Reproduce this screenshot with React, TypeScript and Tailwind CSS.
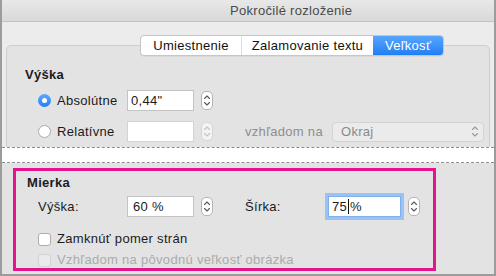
import React from "react";

const font = "font-['Liberation_Sans',Arial,sans-serif]";

function Stepper({ disabled = false }: { disabled?: boolean }) {
  const c = disabled ? "#c4c4c4" : "#5a5a5a";
  return (
    <div
      className={`w-[12px] h-[19px] rounded-[5px] border flex items-center justify-center ${
        disabled ? "border-[#d6d6d6] bg-[#f3f3f3]" : "border-[#b4b4b4] bg-white"
      }`}
    >
      <svg width="8" height="13" viewBox="0 0 8 13" fill="none">
        <path d="M1.5 4.5 L4 2 L6.5 4.5" stroke={c} strokeWidth="1.1" strokeLinecap="round" strokeLinejoin="round" />
        <path d="M1.5 8.5 L4 11 L6.5 8.5" stroke={c} strokeWidth="1.1" strokeLinecap="round" strokeLinejoin="round" />
      </svg>
    </div>
  );
}

function Radio({ checked = false }: { checked?: boolean }) {
  if (checked) {
    return (
      <div className="w-[13px] h-[13px] rounded-full bg-gradient-to-b from-[#5fa8fb] to-[#1f7ef5] flex items-center justify-center">
        <div className="w-[5px] h-[5px] rounded-full bg-white" />
      </div>
    );
  }
  return <div className="w-[13px] h-[13px] rounded-full bg-white border border-[#a9a9a9]" />;
}

function Checkbox({ disabled = false }: { disabled?: boolean }) {
  return (
    <div
      className={`w-[13px] h-[13px] rounded-[3px] border ${
        disabled ? "border-[#d3d3d3] bg-[#eaeaea]" : "border-[#adadad] bg-white"
      }`}
    />
  );
}

const tabs = [
  { label: "Umiestnenie", w: "w-[100px]" },
  { label: "Zalamovanie textu", w: "w-[132px]" },
  { label: "Veľkosť", w: "w-[70px]", active: true },
];

export default function App() {
  return (
    <div
      className={`${font} text-[13px] tracking-[0.3px] text-[#1b1b1b] w-[496px] h-[276px] flex flex-col overflow-hidden border-l-[2px] border-r-[2px] border-b-[2px] border-[#9c9c9c] bg-[#e3e3e3]`}
    >
      {/* Title bar */}
      <div className="h-[22px] shrink-0 bg-gradient-to-b from-[#e8e8e8] to-[#d9d9d9] border-b border-[#c2c2c2] flex items-center pl-[228px] text-[#4a4a4a]">
        Pokročilé rozloženie
      </div>

      {/* Upper part */}
      <div className="h-[125px] shrink-0 bg-[#ececec] pt-[13px] overflow-hidden">
        <div className="relative z-10 ml-[138px] flex h-[21px] w-fit rounded-[4px] border border-[#c6c6c6] bg-white overflow-hidden shadow-[0_0.5px_0.5px_rgba(0,0,0,0.08)]">
          {tabs.map((t, i) => (
            <div
              key={t.label}
              className={`${t.w} flex items-center justify-center ${
                t.active
                  ? "bg-gradient-to-b from-[#58a5fc] to-[#1f7ef6] text-white"
                  : "text-[#111]"
              } ${i > 0 && !t.active ? "border-l border-[#dcdcdc]" : ""}`}
            >
              {t.label}
            </div>
          ))}
        </div>

        <div className="ml-[4px] w-[484px] -mt-[11px] h-[200px] rounded-[5px] border border-[#cfcfcf] bg-[#e3e3e3] pt-[21px] pl-[18px]">
          <div className="font-bold leading-[16px]">Výška</div>

          <div className="mt-[7px] flex items-center h-[21px]">
            <div className="ml-[13px]">
              <Radio checked />
            </div>
            <span className="ml-[6px] w-[70px]">Absolútne</span>
            <div className="w-[67px] h-[21px] bg-white border border-[#c3c3c3] flex items-center pl-[3px]">0,44"</div>
            <div className="ml-[7px]">
              <Stepper />
            </div>
          </div>

          <div className="mt-[10px] flex items-center h-[21px]">
            <div className="ml-[13px]">
              <Radio />
            </div>
            <span className="ml-[6px] w-[70px]">Relatívne</span>
            <div className="w-[67px] h-[21px] bg-white border border-[#d3d3d3]" />
            <div className="ml-[7px]">
              <Stepper disabled />
            </div>
            <span className="ml-[32px] w-[87px] text-[#8e8e8e]">vzhľadom na</span>
            <div className="w-[152px] h-[20px] rounded-[4px] border border-[#d3d3d3] bg-[#ebebeb] flex items-center justify-between pl-[8px] pr-[4px] text-[#8a8a8a]">
              <span>Okraj</span>
              <svg width="8" height="13" viewBox="0 0 8 13" fill="none">
                <path d="M1.5 4.5 L4 2 L6.5 4.5" stroke="#9a9a9a" strokeWidth="1.1" strokeLinecap="round" strokeLinejoin="round" />
                <path d="M1.5 8.5 L4 11 L6.5 8.5" stroke="#9a9a9a" strokeWidth="1.1" strokeLinecap="round" strokeLinejoin="round" />
              </svg>
            </div>
          </div>
        </div>
      </div>

      {/* Cut strip */}
      <div className="h-[16px] shrink-0 bg-white border-y border-dashed border-[#8c8c8c]" />

      {/* Lower part */}
      <div className="flex-1 bg-[#e3e3e3] pt-[5px]">
        <div className="ml-[11px] w-[423px] h-[103px] border-[3px] border-[#e5148c] pl-[11px] pt-[4px]">
          <div className="font-bold leading-[16px]">Mierka</div>

          <div className="mt-[5px] flex items-center h-[21px]">
            <span className="ml-[11px] w-[89px]">Výška:</span>
            <div className="w-[67px] h-[21px] bg-white border border-[#c3c3c3] flex items-center pl-[5px]">60 %</div>
            <div className="ml-[7px]">
              <Stepper />
            </div>
            <span className="ml-[32px] w-[83px]">Šírka:</span>
            <div className="w-[73px] h-[21px] bg-white border border-[#7fb0ee] ring-[3px] ring-[#9cc2f2] flex items-center pl-[3px]">
              75<span className="inline-block w-[1px] h-[15px] bg-[#111] mx-[1px]" />%
            </div>
            <div className="ml-[7px]">
              <Stepper />
            </div>
          </div>

          <div className="mt-[14px] flex items-center h-[16px]">
            <div className="ml-[11px]">
              <Checkbox />
            </div>
            <span className="ml-[6px]">Zamknúť pomer strán</span>
          </div>

          <div className="mt-[5px] flex items-center h-[16px] text-[#ababab]">
            <div className="ml-[11px]">
              <Checkbox disabled />
            </div>
            <span className="ml-[6px]">Vzhľadom na pôvodnú veľkosť obrázka</span>
          </div>
        </div>
      </div>
    </div>
  );
}
